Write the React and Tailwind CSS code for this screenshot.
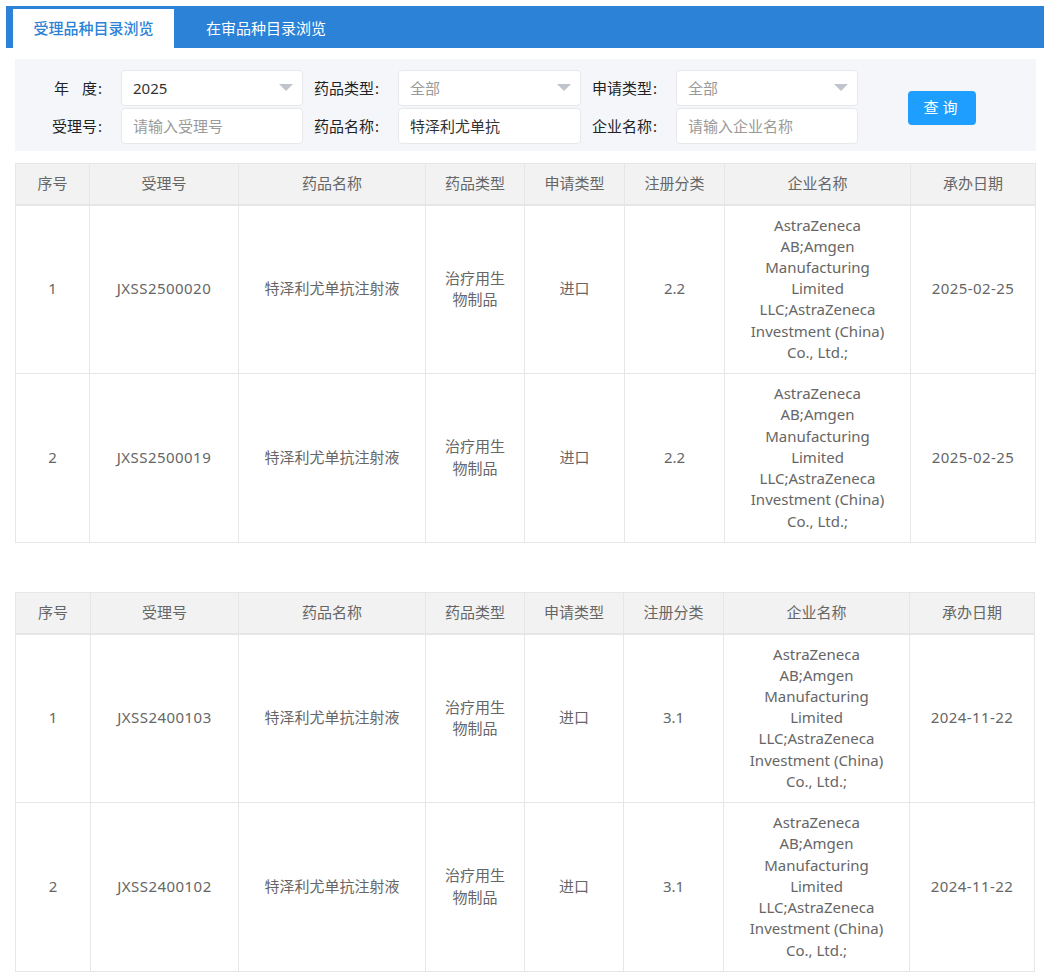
const company = "AstraZeneca AB;Amgen Manufacturing Limited LLC;AstraZeneca Investment (China) Co., Ltd.;";

const tables = [
  {
    widths: [74, 149, 187, 99, 100, 100, 186, 125],
    className: "w-[1020px]",
    rows: [
      { no: 1, code: "JXSS2500020", cat: "2.2", date: "2025-02-25" },
      { no: 2, code: "JXSS2500019", cat: "2.2", date: "2025-02-25" },
    ],
  },
  {
    widths: [75, 148, 187, 99, 99, 100, 186, 125],
    className: "w-[1019px]",
    rows: [
      { no: 1, code: "JXSS2400103", cat: "3.1", date: "2024-11-22" },
      { no: 2, code: "JXSS2400102", cat: "3.1", date: "2024-11-22" },
    ],
  },
];

const headers = ["序号", "受理号", "药品名称", "药品类型", "申请类型", "注册分类", "企业名称", "承办日期"];

function Field({ label, value, placeholder, select }) {
  return (
    <>
      <div className="flex h-9 items-center justify-end pr-[19px] text-[15px] text-[#222]">
        {label}<span className="ml-px">:</span>
      </div>
      <div className="relative flex h-9 items-center rounded border border-[#e6e8ec] bg-white pl-[11px] text-[15px]">
        {value ? <span className="text-[#333]">{value}</span> : <span className="text-[#9a9a9a]">{placeholder}</span>}
        {select && (
          <span className="absolute right-[9px] top-[13px] h-0 w-0 border-x-[7px] border-t-[7px] border-x-transparent border-t-[#c0c4cc]" />
        )}
      </div>
    </>
  );
}

function DrugTable({ table }) {
  return (
    <table className={`${table.className} table-fixed border-collapse text-center text-[15px] leading-[21.2px] text-[#666]`}>
      <colgroup>
        {table.widths.map((w, i) => (
          <col key={i} style={{ width: w }} />
        ))}
      </colgroup>
      <thead>
        <tr className="h-[41px] border-b-2 border-[#e6e6e6] bg-[#f2f2f2]">
          {headers.map((h) => (
            <th key={h} className="border border-[#e6e6e6] font-normal">{h}</th>
          ))}
        </tr>
      </thead>
      <tbody>
        {table.rows.map((r) => (
          <tr key={r.code} className="h-[169px]">
            <td className="border border-[#e6e6e6] pb-px">{r.no}</td>
            <td className="border border-[#e6e6e6] pb-px tracking-[0.45px]">{r.code}</td>
            <td className="border border-[#e6e6e6] pb-px">特泽利尤单抗注射液</td>
            <td className="border border-[#e6e6e6] px-4 pb-px">治疗用生物制品</td>
            <td className="border border-[#e6e6e6] pb-px">进口</td>
            <td className="border border-[#e6e6e6] pb-px">{r.cat}</td>
            <td className="border border-[#e6e6e6] px-[18px] pb-px">{company}</td>
            <td className="border border-[#e6e6e6] pb-px tracking-[0.4px]">{r.date}</td>
          </tr>
        ))}
      </tbody>
    </table>
  );
}

export default function App() {
  return (
    <div className="min-h-[980px] bg-white pt-[6px] font-['Noto_Sans','Noto_Sans_CJK_SC',sans-serif]">
      <div className="mx-[6px] flex h-[42px] w-[1038px] items-end bg-[#2b82d6] pl-[7px] text-[15px]">
        <div className="flex h-[39px] w-[161px] items-center justify-center bg-white font-medium text-[#2b82d6]">受理品种目录浏览</div>
        <div className="flex h-[39px] w-[184px] items-center justify-center text-white">在审品种目录浏览</div>
      </div>

      <div className="ml-[15px] mt-[11px] flex h-[92px] w-[1021px] items-start bg-[#f4f6fa] pl-[11px] pt-[11px]">
        <div className="grid grid-cols-[95px_182px_95px_183px_95px_182px] gap-y-[2px]">
          <Field label={<>年<span className="ml-[13px]">度</span></>} value="2025" select />
          <Field label="药品类型" placeholder="全部" select />
          <Field label="申请类型" placeholder="全部" select />
          <Field label="受理号" placeholder="请输入受理号" />
          <Field label="药品名称" value="特泽利尤单抗" />
          <Field label="企业名称" placeholder="请输入企业名称" />
        </div>
        <button className="ml-[50px] mt-[21px] h-[34px] w-[68px] rounded-sm bg-[#1e9fff] pb-[2px] pl-px text-[15px] tracking-[4px] text-white">查询</button>
      </div>

      <div className="ml-[15px] mt-3 flex flex-col gap-[49px]">
        {tables.map((t) => (
          <DrugTable key={t.rows[0].code} table={t} />
        ))}
      </div>
    </div>
  );
}
